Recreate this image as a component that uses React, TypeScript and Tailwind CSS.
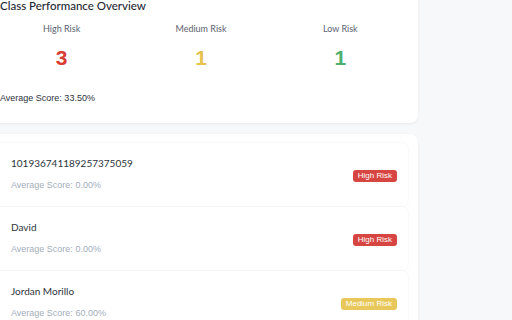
const students = [
  { name: "101936741189257375059", score: "0.00%", risk: "High Risk" },
  { name: "David", score: "0.00%", risk: "High Risk" },
  { name: "Jordan Morillo", score: "60.00%", risk: "Medium Risk" },
];

function badgeColour(risk: string) {
  switch (risk) {
    case "High Risk":
      return "bg-[#d64541]";
    case "Medium Risk":
      return "bg-[#e8c85a]";
    default:
      return "bg-[#4caf6d]";
  }
}

export default function App() {
  return (
    <div className="h-[320px] w-[512px] overflow-hidden bg-[#f7f8fa] font-['Lato',sans-serif]">
      <div className="-ml-4 -mt-[15px] w-[434px]">
        <div className="rounded-lg bg-white px-4 pt-[13px] pb-[19px] shadow-[0_1px_3px_rgba(0,0,0,0.06)]">
          <h2 className="text-[11.5px] leading-4 font-medium text-[#1f2933]">
            Class Performance Overview
          </h2>

          <div className="mt-[9px] grid grid-cols-3 gap-4 text-center">
            <div>
              <div className="text-[9px] leading-3 text-[#5a6270]">High Risk</div>
              <div className="mt-[11px] font-['Liberation_Sans',sans-serif] text-[21px] leading-6 font-bold text-[#d93b35]">
                3
              </div>
            </div>
            <div>
              <div className="text-[9px] leading-3 text-[#5a6270]">Medium Risk</div>
              <div className="mt-[11px] font-['Liberation_Sans',sans-serif] text-[21px] leading-6 font-bold text-[#e6c34f]">
                1
              </div>
            </div>
            <div>
              <div className="text-[9px] leading-3 text-[#5a6270]">Low Risk</div>
              <div className="mt-[11px] font-['Liberation_Sans',sans-serif] text-[21px] leading-6 font-bold text-[#4fb06e]">
                1
              </div>
            </div>
          </div>

          <div className="mt-[22px] font-['Liberation_Sans',sans-serif] text-[9px] leading-3 text-[#2d333b]">
            Average Score: 33.50%
          </div>
        </div>

        <div className="mt-[11px] rounded-lg bg-white pt-[9px] pr-[10px] pl-[10px] shadow-[0_1px_3px_rgba(0,0,0,0.06)]">
          <div className="flex flex-col gap-px">
            {students.map((s) => (
              <div
                key={s.name}
                className="flex h-[63px] items-center justify-between rounded-md bg-white pr-[11px] pl-[17px] shadow-[0_0_2px_rgba(0,0,0,0.08)]"
              >
                <div className="-mt-[2px]">
                  <div className="text-[10px] leading-[14px] text-[#2d333b]">{s.name}</div>
                  <div className="mt-[9px] font-['Liberation_Sans',sans-serif] text-[9px] leading-3 text-[#a4adbb]">
                    Average Score: {s.score}
                  </div>
                </div>
                <div
                  className={`mt-[3px] rounded-[3px] px-[5px] font-['Liberation_Sans',sans-serif] text-[8px] leading-[12.5px] text-white ${badgeColour(
                    s.risk
                  )}`}
                >
                  {s.risk}
                </div>
              </div>
            ))}
          </div>
        </div>
      </div>
    </div>
  );
}
